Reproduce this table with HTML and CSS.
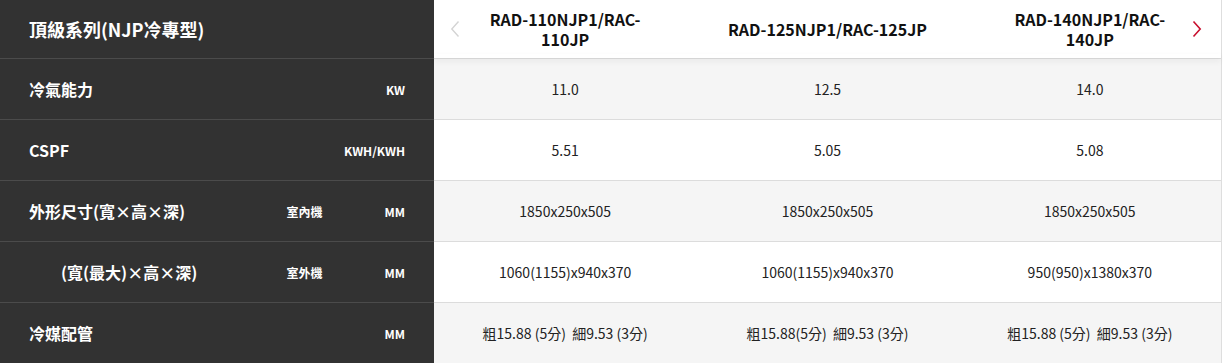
FILE: index.html
```html
<!DOCTYPE html>
<html lang="zh-Hant">
<head>
<meta charset="utf-8">
<title>頂級系列(NJP冷專型)</title>
<link rel="stylesheet" href="styles.css">
</head>
<body>
<div class="spec">
  <div class="row head">
    <div class="side"><span class="title">頂級系列(NJP冷專型)</span></div>
    <div class="cell hcell first">
      <span class="arrow prev"><svg width="10" height="18" viewBox="0 0 10 18"><path d="M8.5 1.5 L1.8 9 L8.5 16.5" fill="none" stroke="#d4d4d4" stroke-width="1.4"/></svg></span>
      <span class="htext">RAD-110NJP1/RAC-<br>110JP</span>
    </div>
    <div class="cell hcell"><span class="htext">RAD-125NJP1/RAC-125JP</span></div>
    <div class="cell hcell last">
      <span class="htext">RAD-140NJP1/RAC-<br>140JP</span>
      <span class="arrow next"><svg width="10" height="18" viewBox="0 0 10 18"><path d="M1.5 1.5 L8.2 9 L1.5 16.5" fill="none" stroke="#c8102e" stroke-width="1.6"/></svg></span>
    </div>
  </div>
  <div class="row grey">
    <div class="side"><span class="label">冷氣能力</span><span class="unit">KW</span></div>
    <div class="cell">11.0</div>
    <div class="cell">12.5</div>
    <div class="cell">14.0</div>
  </div>
  <div class="row">
    <div class="side"><span class="label">CSPF</span><span class="unit">KWH/KWH</span></div>
    <div class="cell">5.51</div>
    <div class="cell">5.05</div>
    <div class="cell">5.08</div>
  </div>
  <div class="row grey">
    <div class="side"><span class="label">外形尺寸(寬×高×深)</span><span class="sub">室內機</span><span class="unit">MM</span></div>
    <div class="cell">1850x250x505</div>
    <div class="cell">1850x250x505</div>
    <div class="cell">1850x250x505</div>
  </div>
  <div class="row">
    <div class="side"><span class="label indent">(寬(最大)×高×深)</span><span class="sub">室外機</span><span class="unit">MM</span></div>
    <div class="cell">1060(1155)x940x370</div>
    <div class="cell">1060(1155)x940x370</div>
    <div class="cell">950(950)x1380x370</div>
  </div>
  <div class="row grey">
    <div class="side"><span class="label">冷媒配管</span><span class="unit">MM</span></div>
    <div class="cell">粗15.88 (5分)&nbsp; 細9.53 (3分)</div>
    <div class="cell">粗15.88(5分)&nbsp; 細9.53 (3分)</div>
    <div class="cell">粗15.88 (5分)&nbsp; 細9.53 (3分)</div>
  </div>
</div>
</body>
</html>
```

FILE: styles.css
```css
* { box-sizing: border-box; }
html, body { margin: 0; padding: 0; background: #fff; }
body {
  font-family: "Noto Sans CJK TC", "Noto Sans", sans-serif;
  width: 1223px;
  height: 363px;
  overflow: hidden;
}
.spec {
  width: 1222px;
  border-right: 1px solid #dedede;
}
.row {
  display: grid;
  grid-template-columns: 434px 1fr 1fr 1fr;
  height: 61px;
}
.row.head {
  height: 58px;
  position: relative;
  z-index: 2;
}
.row.head::after {
  content: "";
  position: absolute;
  left: 434px;
  right: 0;
  bottom: 0;
  height: 4px;
  box-shadow: 0 3px 6px rgba(0,0,0,0.07);
  pointer-events: none;
}
.side {
  background: #323232;
  color: #fff;
  display: flex;
  align-items: center;
  padding: 0 29px;
  border-top: 1px solid #4b4b4b;
  font-weight: 700;
}
.head .side { border-top: none; }
.title { font-size: 18px; }
.label { font-size: 16px; flex: 1; }
.label.indent { padding-left: 32px; }
.sub { font-size: 12px; width: 98px; }
.unit { font-size: 12px; text-align: right; }
.cell {
  display: flex;
  align-items: center;
  justify-content: center;
  text-align: center;
  font-size: 14px;
  color: #222;
  border-top: 1px solid #dcdcdc;
}
.grey .cell { background: #f5f5f5; }
.hcell {
  border-top: none;
  background: #fff;
  font-size: 16px;
  font-weight: 700;
  color: #111;
  line-height: 20px;
  position: relative;
}
.htext { display: block; }
.arrow {
  position: absolute;
  top: 20px;
  line-height: 0;
}
.arrow.prev { left: 16px; }
.arrow.next { right: 19px; }
```
